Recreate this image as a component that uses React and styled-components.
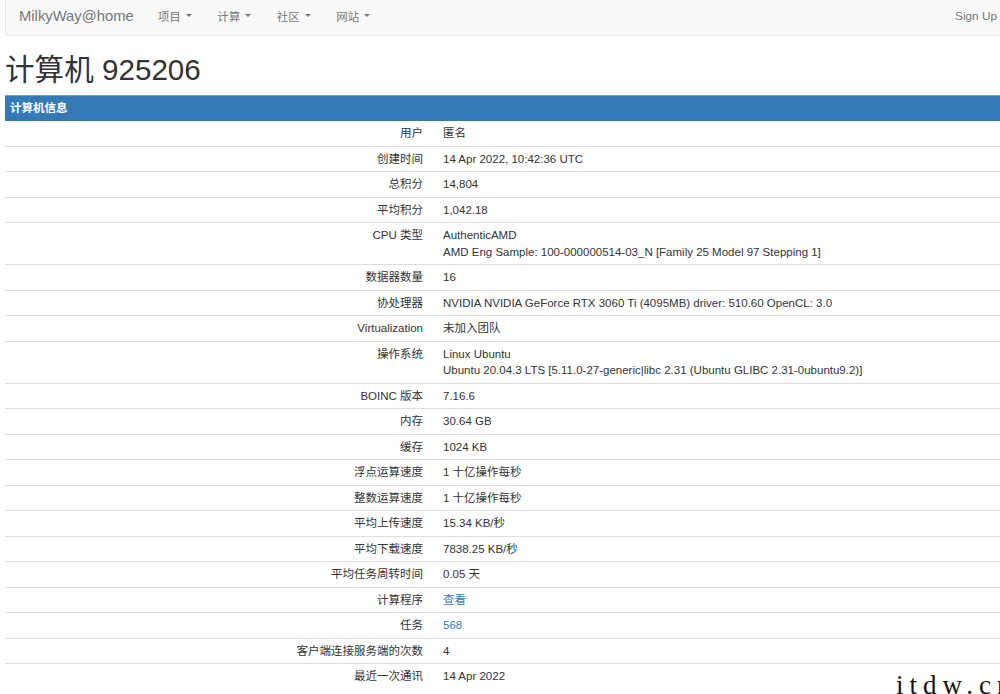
import React from "react";
import styled, { createGlobalStyle } from "styled-components";

const Global = createGlobalStyle`
  html, body { margin: 0; padding: 0; background: #fff; overflow: hidden; }
  body { font-family: "Liberation Sans", Arial, "Noto Sans CJK SC", sans-serif; color: #333; font-size: 11.5px; }
`;

const Page = styled.div`
  position: relative;
  width: 1000px;
  height: 694px;
  overflow: hidden;
  padding-left: 5px;
  box-sizing: border-box;
`;

const Navbar = styled.nav`
  display: flex;
  align-items: center;
  height: 36px;
  width: 995px;
  box-sizing: border-box;
  background: #f8f8f8;
  border: 1px solid #e7e7e7;
  border-top: none;
  border-right: none;
  border-radius: 0 0 0 4px;
  padding: 0 0 0 13px;
`;

const Brand = styled.a`
  font-size: 14.8px;
  color: #777;
  text-decoration: none;
  margin-right: 24px;
  margin-top: -4px;
`;

const NavItem = styled.a`
  display: flex;
  align-items: center;
  font-size: 11.5px;
  color: #777;
  width: 59.5px;
  margin-top: -4px;
  font-family: "Liberation Sans", "Noto Sans CJK SC", sans-serif;
`;

const Caret = styled.span`
  display: inline-block;
  margin-left: 5px;
  width: 0;
  height: 0;
  border-left: 3.5px solid transparent;
  border-right: 3.5px solid transparent;
  border-top: 3.5px solid #777;
`;

const Spacer = styled.div`flex: 1;`;

const SignUp = styled.a`
  font-size: 11.8px;
  color: #777;
  margin-right: 3px;
  margin-top: -4px;
`;

const Title = styled.h1`
  margin: 17px 0 8px 0;
  font-size: 29.6px;
  font-weight: 400;
  line-height: 34px;
  color: #333;
  font-family: "Liberation Sans", "Noto Sans CJK SC", sans-serif;
`;

const Panel = styled.section`
  width: 1010px;
`;

const PanelHeading = styled.div`
  background: #337ab7;
  border-top: 1px solid #6c9dcc;
  color: #fff;
  font-weight: bold;
  font-size: 11.5px;
  height: 25px;
  line-height: 25px;
  padding-left: 5px;
  font-family: "Liberation Sans", "Noto Sans CJK SC", sans-serif;
`;

const Row = styled.div`
  display: grid;
  grid-template-columns: 425px 1fr;
  border-top: ${p => (p.$first ? "none" : "1px solid #ddd")};
  padding: 4px 0 4px 0;
  line-height: 16.5px;
`;

const Label = styled.div`
  text-align: right;
  padding-right: 7px;
  color: #333;
`;

const Value = styled.div`
  padding-left: 13px;
  color: #333;
`;

const Link = styled.a`
  color: #337ab7;
  text-decoration: none;
`;

const Watermark = styled.div`
  position: absolute;
  left: 896px;
  top: 670px;
  font-family: "Liberation Serif", "Times New Roman", serif;
  font-size: 27px;
  letter-spacing: 6px;
  color: #111;
  line-height: 30px;
  white-space: nowrap;
`;

const rows = [
  ["用户", ["匿名"]],
  ["创建时间", ["14 Apr 2022, 10:42:36 UTC"]],
  ["总积分", ["14,804"]],
  ["平均积分", ["1,042.18"]],
  ["CPU 类型", ["AuthenticAMD", "AMD Eng Sample: 100-000000514-03_N [Family 25 Model 97 Stepping 1]"]],
  ["数据器数量", ["16"]],
  ["协处理器", ["NVIDIA NVIDIA GeForce RTX 3060 Ti (4095MB) driver: 510.60 OpenCL: 3.0"]],
  ["Virtualization", ["未加入团队"]],
  ["操作系统", ["Linux Ubuntu", "Ubuntu 20.04.3 LTS [5.11.0-27-generic|libc 2.31 (Ubuntu GLIBC 2.31-0ubuntu9.2)]"]],
  ["BOINC 版本", ["7.16.6"]],
  ["内存", ["30.64 GB"]],
  ["缓存", ["1024 KB"]],
  ["浮点运算速度", ["1 十亿操作每秒"]],
  ["整数运算速度", ["1 十亿操作每秒"]],
  ["平均上传速度", ["15.34 KB/秒"]],
  ["平均下载速度", ["7838.25 KB/秒"]],
  ["平均任务周转时间", ["0.05 天"]],
  ["计算程序", ["查看"], true],
  ["任务", ["568"], true],
  ["客户端连接服务端的次数", ["4"]],
  ["最近一次通讯", ["14 Apr 2022"]],
];

export default function App() {
  return (
    <>
      <Global />
      <Page>
        <Navbar>
          <Brand>MilkyWay@home</Brand>
          {["项目", "计算", "社区", "网站"].map(t => (
            <NavItem key={t}>
              {t}
              <Caret />
            </NavItem>
          ))}
          <Spacer />
          <SignUp>Sign Up</SignUp>
        </Navbar>
        <Title>计算机 925206</Title>
        <Panel>
          <PanelHeading>计算机信息</PanelHeading>
          {rows.map(([label, vals, link], i) => (
            <Row key={label} $first={i === 0}>
              <Label>{label}</Label>
              <Value>
                {vals.map((v, j) => (
                  <div key={j}>{link ? <Link href="#">{v}</Link> : v}</div>
                ))}
              </Value>
            </Row>
          ))}
        </Panel>
        <Watermark>itdw.cn</Watermark>
      </Page>
    </>
  );
}
